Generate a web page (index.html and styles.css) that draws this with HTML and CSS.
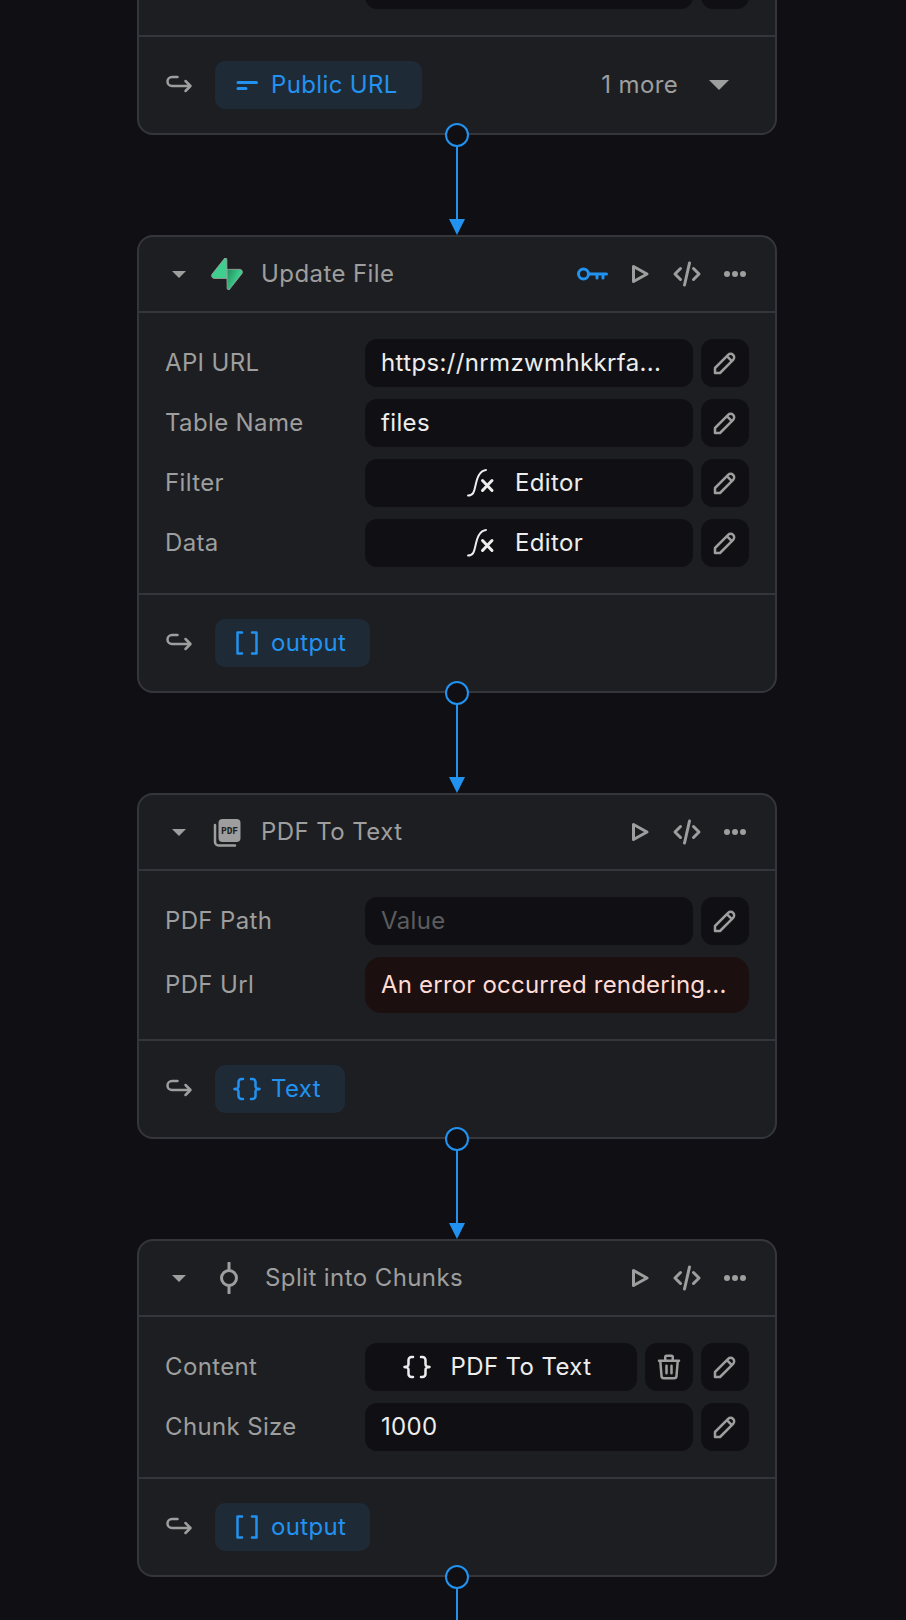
FILE: index.html
```html
<!DOCTYPE html>
<html lang="en">
<head>
<meta charset="utf-8">
<title>Flow</title>
<link rel="stylesheet" href="styles.css">
</head>
<body>
<svg class="sprite" aria-hidden="true">
  <defs>
    <linearGradient id="sb-a" x1="53.97" y1="54.97" x2="94.16" y2="71.83" gradientUnits="userSpaceOnUse"><stop offset="0" stop-color="#249361"/><stop offset="1" stop-color="#3ecf8e"/></linearGradient>
    <symbol id="i-pencil" viewBox="0 0 24 24"><path d="M4 20h4l10.500-10.500a2.828 2.828 0 1 0-4-4L4 16v4M13.500 6.500l4 4"/></symbol>
    <symbol id="i-trash" viewBox="0 0 24 24"><path d="M4 7h16M10 11v6M14 11v6M5 7l1 12a2 2 0 0 0 2 2h8a2 2 0 0 0 2-2l1-12M9 7V4a1 1 0 0 1 1-1h4a1 1 0 0 1 1 1v3"/></symbol>
    <symbol id="i-play" viewBox="0 0 32 32"><path d="M10.500 8.500v15L24 16z"/></symbol>
    <symbol id="i-code" viewBox="0 0 32 32"><path d="M9.500 10.500 4 16l5.500 5.500M22.500 10.500 28 16l-5.500 5.500M18.500 5l-5 22"/></symbol>
    <symbol id="i-dots" viewBox="0 0 32 32"><circle cx="8" cy="16" r="3"/><circle cx="16" cy="16" r="3"/><circle cx="24" cy="16" r="3"/></symbol>
    <symbol id="i-return" viewBox="0 0 28 20"><path d="M11.500 2H6a4.500 4.500 0 0 0 0 9h18.500M19.500 6l5 5-5 5"/></symbol>
    <symbol id="i-fx" viewBox="0 0 32 32"><path class="i-thin" d="M3 28.500c5 0 6-3 7.500-10S14 4 21 3"/><path d="M17.500 13.500l9.500 10M27 13.500l-9.500 10"/></symbol>
    <symbol id="i-braces" viewBox="0 0 32 32"><path class="i-mid" d="M12 6h-1.500a3 3 0 0 0-3 3v4a3 3 0 0 1-4 3 3 3 0 0 1 4 3v4a3 3 0 0 0 3 3H12M20 6h1.500a3 3 0 0 1 3 3v4a3 3 0 0 0 4 3 3 3 0 0 0-4 3v4a3 3 0 0 1-3 3H20"/></symbol>
    <symbol id="i-brackets" viewBox="0 0 32 32"><path class="i-mid" d="M11 5.500H6.500v21H11M21 5.500h4.500v21H21"/></symbol>
    <symbol id="i-lines" viewBox="0 0 32 32"><path d="M7 13.500h18.500M7 19.500h8"/></symbol>
    <symbol id="i-link" viewBox="0 0 32 113"><circle cx="16" cy="13" r="11"/><path d="M16 24v74"/><path class="i-solid" d="M8 97h16l-8 16z"/></symbol>
  </defs>
</svg>

<main class="canvas">

  <section class="card card-cut">
    <div class="card-body">
      <div class="row">
        <span class="label"></span>
        <div class="field"></div>
        <button class="square"></button>
      </div>
    </div>
    <div class="card-foot">
      <svg class="ret"><use href="#i-return"/></svg>
      <span class="pill"><svg class="ic"><use href="#i-lines"/></svg>Public URL</span>
      <span class="more">1 more<i class="caret caret-lg"></i></span>
    </div>
  </section>

  <svg class="link"><use href="#i-link"/></svg>

  <section class="card">
    <header class="card-head">
      <i class="caret"></i>
      <svg class="logo" viewBox="0 0 109 113"><path fill="url(#sb-a)" d="M63.7 110.3c-2.860 3.600-8.660 1.630-8.720-2.970L53.970 40.060h45.220c8.190 0 12.760 9.460 7.670 15.880L63.700 110.300z"/><path fill="#3ecf8e" d="M45.320 2.070c2.860-3.600 8.660-1.630 8.720 2.970l.44 67.250H9.830c-8.190 0-12.760-9.460-7.670-15.870L45.320 2.070z"/></svg>
      <h2 class="title">Update File</h2>
      <div class="actions">
        <svg class="act act-key" viewBox="0 0 32 32"><circle cx="8.500" cy="16" r="5"/><path d="M13.500 16h18M22 16v4M28 16v4"/></svg>
        <svg class="act"><use href="#i-play"/></svg>
        <svg class="act"><use href="#i-code"/></svg>
        <svg class="act act-dots"><use href="#i-dots"/></svg>
      </div>
    </header>
    <div class="card-body">
      <div class="row"><span class="label">API URL</span><div class="field">https://nrmzwmhkkrfa...</div><button class="square"><svg class="ic-btn"><use href="#i-pencil"/></svg></button></div>
      <div class="row"><span class="label">Table Name</span><div class="field">files</div><button class="square"><svg class="ic-btn"><use href="#i-pencil"/></svg></button></div>
      <div class="row"><span class="label">Filter</span><div class="field field-center"><svg class="ic"><use href="#i-fx"/></svg>Editor</div><button class="square"><svg class="ic-btn"><use href="#i-pencil"/></svg></button></div>
      <div class="row"><span class="label">Data</span><div class="field field-center"><svg class="ic"><use href="#i-fx"/></svg>Editor</div><button class="square"><svg class="ic-btn"><use href="#i-pencil"/></svg></button></div>
    </div>
    <div class="card-foot">
      <svg class="ret"><use href="#i-return"/></svg>
      <span class="pill"><svg class="ic"><use href="#i-brackets"/></svg>output</span>
    </div>
  </section>

  <svg class="link"><use href="#i-link"/></svg>

  <section class="card">
    <header class="card-head">
      <i class="caret"></i>
      <svg class="logo" viewBox="0 0 32 32"><path class="pdf-back" d="M4 9v17a3.500 3.500 0 0 0 3.500 3.500H24"/><rect class="pdf-sheet" x="7.500" y="3" width="22" height="23" rx="4"/><text class="pdf-text" x="18.500" y="18">PDF</text></svg>
      <h2 class="title">PDF To Text</h2>
      <div class="actions">
        <svg class="act"><use href="#i-play"/></svg>
        <svg class="act"><use href="#i-code"/></svg>
        <svg class="act act-dots"><use href="#i-dots"/></svg>
      </div>
    </header>
    <div class="card-body">
      <div class="row"><span class="label">PDF Path</span><div class="field field-empty">Value</div><button class="square"><svg class="ic-btn"><use href="#i-pencil"/></svg></button></div>
      <div class="row"><span class="label">PDF Url</span><div class="field field-error">An error occurred rendering...</div></div>
    </div>
    <div class="card-foot">
      <svg class="ret"><use href="#i-return"/></svg>
      <span class="pill"><svg class="ic"><use href="#i-braces"/></svg>Text</span>
    </div>
  </section>

  <svg class="link"><use href="#i-link"/></svg>

  <section class="card">
    <header class="card-head">
      <i class="caret"></i>
      <svg class="logo logo-wide" viewBox="0 0 36 32"><circle cx="18" cy="16" r="7.500"/><path d="M18 1v7.500M18 23.500V31"/></svg>
      <h2 class="title">Split into Chunks</h2>
      <div class="actions">
        <svg class="act"><use href="#i-play"/></svg>
        <svg class="act"><use href="#i-code"/></svg>
        <svg class="act act-dots"><use href="#i-dots"/></svg>
      </div>
    </header>
    <div class="card-body">
      <div class="row"><span class="label">Content</span><div class="field field-center"><svg class="ic"><use href="#i-braces"/></svg>PDF To Text</div><button class="square"><svg class="ic-btn"><use href="#i-trash"/></svg></button><button class="square"><svg class="ic-btn"><use href="#i-pencil"/></svg></button></div>
      <div class="row"><span class="label">Chunk Size</span><div class="field">1000</div><button class="square"><svg class="ic-btn"><use href="#i-pencil"/></svg></button></div>
    </div>
    <div class="card-foot">
      <svg class="ret"><use href="#i-return"/></svg>
      <span class="pill"><svg class="ic"><use href="#i-brackets"/></svg>output</span>
    </div>
  </section>

  <svg class="link"><use href="#i-link"/></svg>

</main>
</body>
</html>
```

FILE: styles.css
```css
* { box-sizing: border-box; }

html, body {
  margin: 0;
  height: 1620px;
  overflow: hidden;
  background: #101014;
}

body {
  font-family: Inter, "Liberation Sans", sans-serif;
  font-optical-sizing: none;
  font-size: 24px;
  line-height: 32px;
  letter-spacing: 0.36px;
  color: #9e9e9e;
}

.sprite {
  position: absolute;
  width: 0;
  height: 0;
}

.canvas {
  display: flex;
  flex-direction: column;
  width: 640px;
  margin-left: 137px;
}

.card {
  flex: none;
  background: #1d1e22;
  border: 2px solid #35363b;
  border-radius: 16px;
}

.card-cut { margin-top: -67px; }

.card-head {
  display: flex;
  align-items: center;
  height: 76px;
  padding: 0 16px 0 33px;
  border-bottom: 2px solid #35363b;
}

.caret {
  flex: none;
  width: 0;
  height: 0;
  border-left: 7px solid transparent;
  border-right: 7px solid transparent;
  border-top: 7px solid #9e9e9e;
}

.caret-lg {
  border-left-width: 10px;
  border-right-width: 10px;
  border-top-width: 10px;
  margin-left: 31px;
}

.logo {
  flex: none;
  width: 32px;
  height: 32px;
  margin-left: 25px;
  fill: none;
  stroke: #9e9e9e;
  stroke-width: 3px;
  stroke-linecap: round;
}

.logo-wide { width: 36px; }

.title {
  margin: 0 0 0 18px;
  font-size: 24px;
  font-weight: 400;
  letter-spacing: 0.42px;
}

.actions {
  display: flex;
  margin-left: auto;
}

.act {
  width: 48px;
  height: 32px;
  fill: none;
  stroke: #9e9e9e;
  stroke-width: 3px;
  stroke-linecap: round;
  stroke-linejoin: round;
}

.act-key { stroke: #2292f0; }
.act-dots { fill: #9e9e9e; stroke: none; }

.card-body {
  display: flex;
  flex-direction: column;
  gap: 12px;
  padding: 26px;
}

.row {
  display: flex;
  align-items: center;
  gap: 8px;
}

.label {
  flex: none;
  width: 192px;
}

.field {
  flex: 1;
  display: flex;
  align-items: center;
  height: 48px;
  padding: 0 16px;
  border-radius: 12px;
  background: #101014;
  color: #ededed;
}

.field-center {
  justify-content: center;
  gap: 18px;
  padding-right: 26px;
}

.field-empty { color: #5c5c5f; }

.field-error {
  height: 56px;
  border-radius: 16px;
  background: #1b100f;
  color: #ffdbd6;
  letter-spacing: 0.2px;
}

.square {
  flex: none;
  display: flex;
  align-items: center;
  justify-content: center;
  width: 48px;
  height: 48px;
  padding: 0;
  border: 0;
  border-radius: 12px;
  background: #101014;
}

.ic-btn {
  width: 30px;
  height: 30px;
  fill: none;
  stroke: #9e9e9e;
  stroke-width: 2px;
  stroke-linecap: round;
  stroke-linejoin: round;
}

.ic {
  flex: none;
  width: 32px;
  height: 32px;
  fill: none;
  stroke: currentColor;
  stroke-width: 3px;
  stroke-linecap: round;
  stroke-linejoin: round;
}

.card-foot {
  display: flex;
  align-items: center;
  padding: 24px 26px 24px 27px;
  border-top: 2px solid #35363b;
}

.ret {
  flex: none;
  width: 28px;
  height: 20px;
  fill: none;
  stroke: #9e9e9e;
  stroke-width: 2.500px;
  stroke-linecap: round;
  stroke-linejoin: round;
}

.pill {
  display: flex;
  align-items: center;
  gap: 8px;
  height: 48px;
  margin-left: 21px;
  padding: 0 24px 0 16px;
  border-radius: 10px;
  background: #1f2a37;
  color: #2292f0;
}

.more {
  display: flex;
  align-items: center;
  margin-left: auto;
  padding-right: 20px;
}

.link {
  position: relative;
  flex: none;
  align-self: center;
  width: 32px;
  height: 113px;
  margin-top: -13px;
  fill: #101014;
  stroke: #2292f0;
  stroke-width: 2px;
}

.i-solid {
  fill: #2292f0;
  stroke: none;
}

.i-thin { stroke-width: 2px; }
.i-mid { stroke-width: 2.500px; }

.pdf-back {
  fill: none;
  stroke-width: 2.500px;
}

.pdf-sheet {
  fill: #9e9e9e;
  stroke: none;
}

.pdf-text {
  font-family: "DejaVu Sans Mono", monospace;
  font-size: 9.500px;
  font-weight: 700;
  letter-spacing: 0;
  text-anchor: middle;
  fill: #1d1e22;
  stroke: none;
}
```
